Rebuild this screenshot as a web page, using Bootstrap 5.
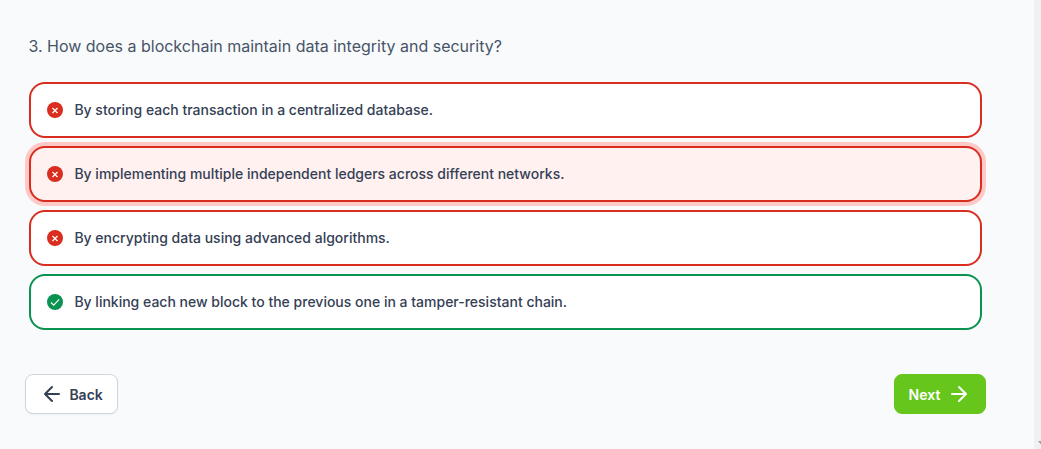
<!DOCTYPE html>
<html lang="en">
<head>
<meta charset="utf-8">
<meta name="viewport" content="width=device-width, initial-scale=1">
<title>Quiz</title>
<link href="https://cdn.jsdelivr.net/npm/bootstrap@5.3.0/dist/css/bootstrap.min.css" rel="stylesheet">
<style>
body{font-family:Inter,sans-serif;background:#f9fafc;height:100vh;overflow:hidden}
.quiz{padding:34px 48px 0 25px}
.track{width:7px;background:#f0f0f0;padding:0 0 4px 4px}
.question{font-size:16px;line-height:24px;color:#475467;margin:0 0 24px 3.4px}
.answers{gap:8px;margin:0 4px 44px}
.answer{height:56px;border:2px solid #d92d20;border-radius:16px;background:#fff;padding:0 16px;gap:11.4px;font-size:14px;line-height:20px;font-weight:500;color:#344054}
.answer.picked{background:#fff1f0;box-shadow:0 0 0 4px #fec9c6}
.answer.correct{border-color:#099250}
.action{height:40px;border-radius:8px;font-size:14px;line-height:20px;font-weight:600}
.action span{padding-top:2px}
.btn-back{width:93px;background:#fff;border:1px solid #d0d5dd;color:#344054;box-shadow:0 1px 2px rgba(16,24,40,.05);padding:0 0 0 14px;gap:5.4px}
.btn-next{width:92px;background:#66c61c;border:1px solid #66c61c;color:#fff;padding:0 0 0 13.6px;gap:6px}
.btn-next svg{margin-left:auto;margin-right:14px}
</style>
</head>
<body class="d-flex">
<main class="quiz flex-grow-1">
<p class="question">3. How does a blockchain maintain data integrity and security?</p>
<div class="answers d-flex flex-column">
<div class="answer d-flex align-items-center"><svg width="16" height="16" viewBox="0 0 16 16"><circle cx="8" cy="8" r="8" fill="#d92d20"/><path d="M5.500 6l5 5m0-5l-5 5" stroke="#fff" stroke-width="1.200"/></svg><span>By storing each transaction in a centralized database.</span></div>
<div class="answer picked d-flex align-items-center"><svg width="16" height="16" viewBox="0 0 16 16"><circle cx="8" cy="8" r="8" fill="#d92d20"/><path d="M5.500 6l5 5m0-5l-5 5" stroke="#fff" stroke-width="1.200"/></svg><span>By implementing multiple independent ledgers across different networks.</span></div>
<div class="answer d-flex align-items-center"><svg width="16" height="16" viewBox="0 0 16 16"><circle cx="8" cy="8" r="8" fill="#d92d20"/><path d="M5.500 6l5 5m0-5l-5 5" stroke="#fff" stroke-width="1.200"/></svg><span>By encrypting data using advanced algorithms.</span></div>
<div class="answer correct d-flex align-items-center"><svg width="16" height="16" viewBox="0 0 16 16"><circle cx="8" cy="8" r="8" fill="#099250"/><path d="M4 8.500l2.700 2.700 5.500-5.900" fill="none" stroke="#fff" stroke-width="1.100"/></svg><span>By linking each new block to the previous one in a tamper-resistant chain.</span></div>
</div>
<div class="d-flex justify-content-between">
<button class="btn action btn-back d-flex align-items-center" type="button"><svg width="24" height="24" viewBox="0 0 24 24" fill="none" stroke="currentColor" stroke-width="2" stroke-linecap="round" stroke-linejoin="round"><path d="M19 12H5m7-7l-7 7 7 7"/></svg><span>Back</span></button>
<button class="btn action btn-next d-flex align-items-center" type="button"><span>Next</span><svg width="24" height="24" viewBox="0 0 24 24" fill="none" stroke="currentColor" stroke-width="2" stroke-linecap="round" stroke-linejoin="round"><path d="M5 12h14m-7-7l7 7-7 7"/></svg></button>
</div>
</main>
<div class="track flex-shrink-0 d-flex align-items-end overflow-hidden"><svg class="flex-shrink-0" width="7" height="4" viewBox="0 0 7 4"><path d="M0 0h7L3.500 4z" fill="#a0a0a0"/></svg></div>
<script src="https://cdn.jsdelivr.net/npm/bootstrap@5.3.0/dist/js/bootstrap.bundle.min.js"></script>
</body>
</html>
